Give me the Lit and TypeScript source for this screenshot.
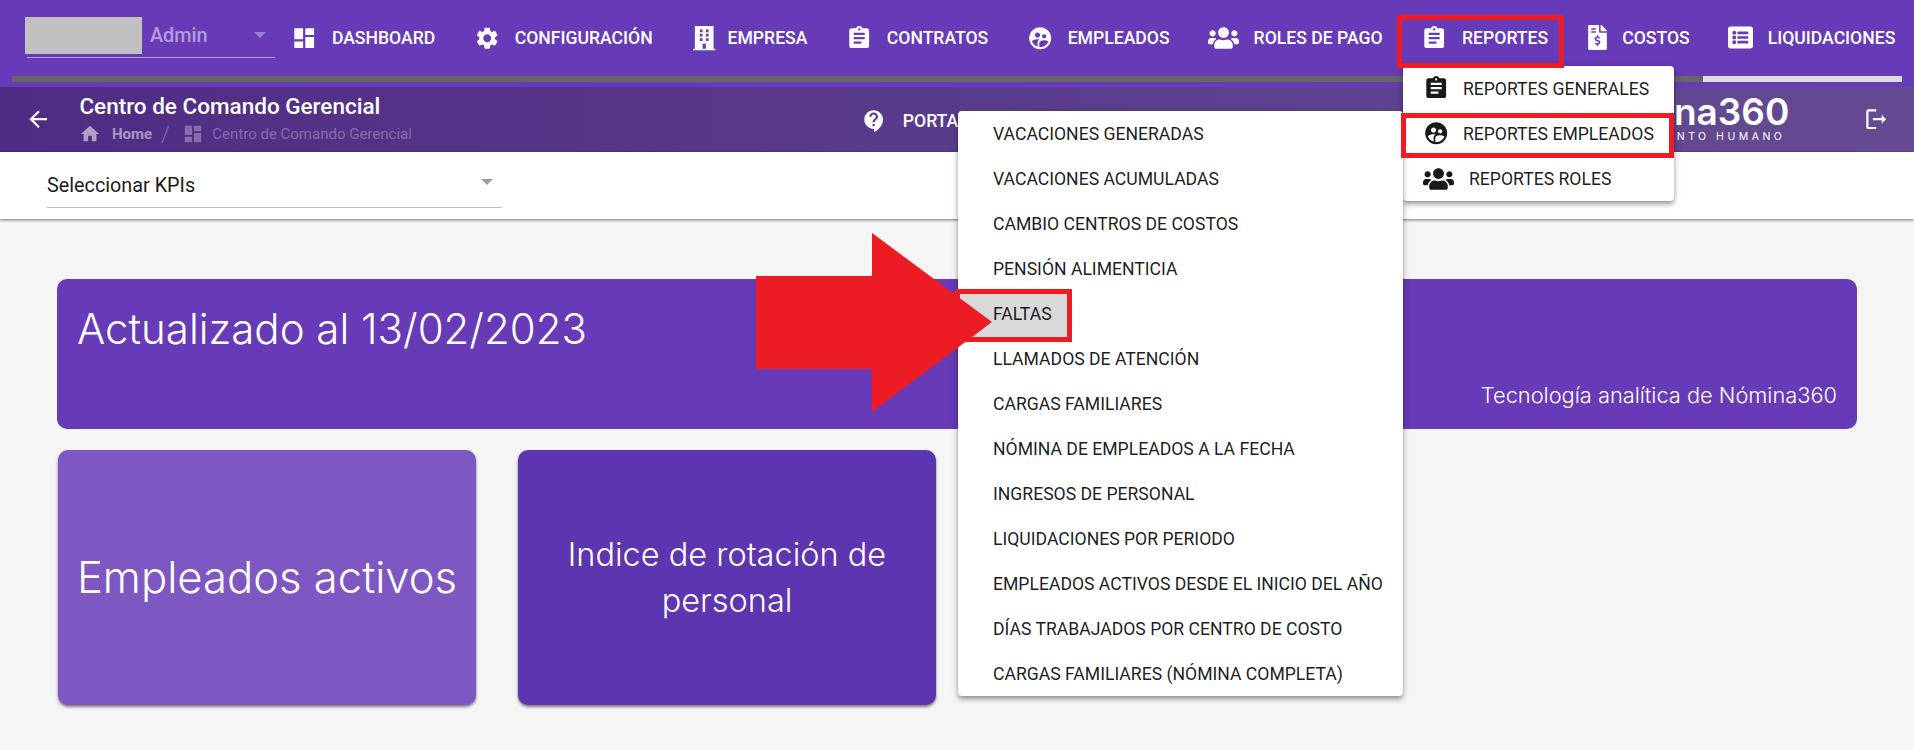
import { LitElement, html, css, svg } from "lit";
import { customElement } from "lit/decorators.js";

const P: Record<string, any> = {
  dashboard: svg`<path d="M3 13h8V3H3v10zm0 8h8v-6H3v6zm10 0h8V11h-8v10zm0-18v6h8V3h-8z"/>`,
  settings: svg`<path d="M19.14 12.94c.04-.3.06-.61.06-.94 0-.32-.02-.64-.07-.94l2.03-1.58c.18-.14.23-.41.12-.61l-1.92-3.32c-.12-.22-.37-.29-.59-.22l-2.39.96c-.5-.38-1.03-.7-1.62-.94L14.4 2.81c-.04-.24-.24-.41-.48-.41h-3.84c-.24 0-.43.17-.47.41L9.25 5.35c-.59.24-1.13.57-1.62.94l-2.39-.96c-.22-.08-.47 0-.59.22L2.74 8.87c-.12.21-.08.47.12.61l2.03 1.58c-.05.3-.09.63-.09.94s.02.64.07.94l-2.03 1.58c-.18.14-.23.41-.12.61l1.92 3.32c.12.22.37.29.59.22l2.39-.96c.5.38 1.03.7 1.62.94l.36 2.54c.05.24.24.41.48.41h3.84c.24 0 .44-.17.47-.41l.36-2.54c.59-.24 1.13-.56 1.62-.94l2.39.96c.22.08.47 0 .59-.22l1.92-3.32c.12-.22.07-.47-.12-.61l-2.01-1.58zM12 15.6c-1.98 0-3.6-1.62-3.6-3.6s1.62-3.6 3.6-3.6 3.6 1.62 3.6 3.6-1.62 3.6-3.6 3.6z"/>`,
  building: svg`<path fill-rule="evenodd" d="M3.500 1h17v20.500H22V23H2v-1.500h1.500zM8 4v2.500h2.500V4zm5.500 0v2.500H16V4zM8 8v2.500h2.500V8zm5.500 0v2.500H16V8zM8 12v2.500h2.500V12zm5.500 0v2.500H16V12zm-3 5v4.500h3V17z"/>`,
  clipboard: svg`<path d="M19 3h-4.180C14.400 1.840 13.300 1 12 1s-2.400.840-2.820 2H5c-1.100 0-2 .9-2 2v14c0 1.100.9 2 2 2h14c1.100 0 2-.9 2-2V5c0-1.100-.9-2-2-2zm-7 0c.550 0 1 .450 1 1s-.450 1-1 1-1-.450-1-1 .450-1 1-1zm2 14H7v-2h7v2zm3-4H7v-2h10v2zm0-4H7V7h10v2z"/>`,
  face: svg`<path d="M12,2C6.47,2 2,6.5 2,12A10,10 0 0,0 12,22A10,10 0 0,0 22,12C22,6.5 17.5,2 12,2M15.6,8.34C16.67,8.34 17.53,9.2 17.53,10.27C17.53,11.34 16.67,12.2 15.6,12.2A1.93,1.93 0 0,1 13.67,10.27C13.66,9.2 14.53,8.34 15.6,8.34M9.6,6.76C10.9,6.76 11.96,7.82 11.96,9.12C11.96,10.42 10.9,11.5 9.6,11.5C8.3,11.5 7.24,10.42 7.24,9.12C7.24,7.81 8.29,6.76 9.6,6.76M9.6,15.89V19.64C7.2,18.89 5.3,17.04 4.46,14.68C5.5,13.56 8.13,13 9.6,13C10.13,13 10.8,13.07 11.5,13.21C9.86,14.08 9.6,15.23 9.6,15.89M12,20C11.72,20 11.46,20 11.2,19.96V15.89C11.2,14.47 14.14,13.76 15.6,13.76C16.67,13.76 18.5,14.15 19.44,14.91C18.27,17.88 15.38,20 12,20Z"/>`,
  people: svg`<path d="M96 224c35.300 0 64-28.700 64-64s-28.700-64-64-64-64 28.700-64 64 28.700 64 64 64zm448 0c35.300 0 64-28.700 64-64s-28.700-64-64-64-64 28.700-64 64 28.700 64 64 64zm32 32h-64c-17.600 0-33.500 7.100-45.100 18.600 40.300 22.100 68.900 62 75.100 109.400h66c17.700 0 32-14.300 32-32v-32c0-35.300-28.700-64-64-64zm-256 0c61.900 0 112-50.100 112-112S381.900 32 320 32 208 82.100 208 144s50.100 112 112 112zm76.800 32h-8.300c-20.800 10-43.900 16-68.500 16s-47.600-6-68.500-16h-8.300C179.600 288 128 339.600 128 403.200V432c0 26.500 21.500 48 48 48h288c26.500 0 48-21.500 48-48v-28.800c0-63.600-51.600-115.200-115.200-115.200zm-223.700-13.400C161.500 263.100 145.600 256 128 256H64c-35.300 0-64 28.700-64 64v32c0 17.700 14.300 32 32 32h65.900c6.300-47.400 34.900-87.300 75.200-109.400z"/>`,
  invoice: svg`<path d="M377 105L279.100 7c-4.500-4.500-10.600-7-17-7H256v128h128v-6.100c0-6.300-2.500-12.400-7-16.900zM224 136V0H24C10.700 0 0 10.700 0 24v464c0 13.300 10.700 24 24 24h336c13.300 0 24-10.700 24-24V160H248c-13.200 0-24-10.800-24-24zM64 72c0-4.420 3.580-8 8-8h80c4.420 0 8 3.580 8 8v16c0 4.420-3.580 8-8 8H72c-4.420 0-8-3.580-8-8V72zm0 64c0-4.420 3.580-8 8-8h80c4.420 0 8 3.580 8 8v16c0 4.420-3.580 8-8 8H72c-4.420 0-8-3.580-8-8v-16zm144 263.880V424c0 4.420-3.580 8-8 8h-16c-4.420 0-8-3.580-8-8v-24.290c-11.290-.58-22.270-4.520-31.370-11.350-3.900-2.930-4.100-8.770-.57-12.140l11.750-11.210c2.770-2.640 6.890-2.760 10.130-.73 3.870 2.420 8.260 3.720 12.820 3.720h28.110c6.500 0 11.800-5.920 11.800-13.190 0-5.950-3.610-11.190-8.770-12.730l-45-13.500c-18.590-5.580-31.580-23.420-31.580-43.390 0-24.520 19.050-44.440 42.670-45.070V216c0-4.420 3.580-8 8-8h16c4.420 0 8 3.580 8 8v24.290c11.290.58 22.270 4.510 31.370 11.350 3.900 2.930 4.100 8.770.57 12.140l-11.750 11.210c-2.770 2.640-6.890 2.760-10.130.73-3.870-2.430-8.260-3.720-12.820-3.720h-28.110c-6.500 0-11.800 5.920-11.800 13.190 0 5.950 3.610 11.190 8.770 12.730l45 13.500c18.590 5.580 31.580 23.420 31.580 43.390 0 24.530-19.050 44.440-42.670 45.070z"/>`,
  list: svg`<path d="M464 480H48c-26.510 0-48-21.490-48-48V80c0-26.510 21.490-48 48-48h416c26.510 0 48 21.490 48 48v352c0 26.510-21.490 48-48 48zM128 120c-22.091 0-40 17.909-40 40s17.909 40 40 40 40-17.909 40-40-17.909-40-40-40zm0 96c-22.091 0-40 17.909-40 40s17.909 40 40 40 40-17.909 40-40-17.909-40-40-40zm0 96c-22.091 0-40 17.909-40 40s17.909 40 40 40 40-17.909 40-40-17.909-40-40-40zm288-136v-32c0-6.627-5.373-12-12-12H204c-6.627 0-12 5.373-12 12v32c0 6.627 5.373 12 12 12h200c6.627 0 12-5.373 12-12zm0 96v-32c0-6.627-5.373-12-12-12H204c-6.627 0-12 5.373-12 12v32c0 6.627 5.373 12 12 12h200c6.627 0 12-5.373 12-12zm0 96v-32c0-6.627-5.373-12-12-12H204c-6.627 0-12 5.373-12 12v32c0 6.627 5.373 12 12 12h200c6.627 0 12-5.373 12-12z"/>`,
  home: svg`<path d="M10 20v-6h4v6h5v-8h3L12 3 2 12h3v8z"/>`,
  back: svg`<path d="M20 11H7.830l5.590-5.590L12 4l-8 8 8 8 1.410-1.410L7.830 13H20v-2z"/>`,
  help: svg`<path fill-rule="evenodd" d="M11.500 2C6.810 2 3 5.810 3 10.500S6.810 19 11.500 19h.5v3c4.860-2.340 8-7 8-11.500C20 5.810 16.190 2 11.500 2zm1 14.500h-2v-2h2v2zm0-3.500h-2c0-3.250 3-3 3-5 0-1.100-.9-2-2-2s-2 .9-2 2h-2c0-2.210 1.790-4 4-4s4 1.790 4 4c0 2.500-3 2.750-3 5z"/>`,
  logout: svg`<path d="M5 5h7V3H5c-1.100 0-2 .9-2 2v14c0 1.100.9 2 2 2h7v-2H5V5zm16 7l-4-4v3H9v2h8v3l4-4z"/>`,
};
const VB: Record<string, string> = { invoice: "0 0 384 512", list: "0 0 512 512", people: "0 32 640 448" };
const icon = (n: string, c = "") => html`<svg class="ic ${n} ${c}" viewBox="${VB[n] ?? "0 0 24 24"}">${P[n]}</svg>`;

const NAV = [
  ["dashboard", "DASHBOARD"], ["settings", "CONFIGURACIÓN"], ["building", "EMPRESA"],
  ["clipboard", "CONTRATOS"], ["face", "EMPLEADOS"], ["people", "ROLES DE PAGO"],
  ["clipboard", "REPORTES"], ["invoice", "COSTOS"], ["list", "LIQUIDACIONES"],
];
const ITEMS = [
  "VACACIONES GENERADAS", "VACACIONES ACUMULADAS", "CAMBIO CENTROS DE COSTOS", "PENSIÓN ALIMENTICIA",
  "FALTAS", "LLAMADOS DE ATENCIÓN", "CARGAS FAMILIARES", "NÓMINA DE EMPLEADOS A LA FECHA",
  "INGRESOS DE PERSONAL", "LIQUIDACIONES POR PERIODO", "EMPLEADOS ACTIVOS DESDE EL INICIO DEL AÑO",
  "DÍAS TRABAJADOS POR CENTRO DE COSTO", "CARGAS FAMILIARES (NÓMINA COMPLETA)",
];

@customElement("app-root")
export class AppRoot extends LitElement {
  static styles = css`
    :host { display: block; position: relative; width: 1914px; height: 750px; overflow: hidden; background: #f5f5f5; font-family: Roboto, sans-serif; }
    .ic { width: 26.400px; height: 26.400px; fill: currentColor; flex: none; display: block; }
    .ic.people { width: 31px; height: 22px; }
    .ic.invoice { width: 19px; height: 25px; margin: 0 1px; }
    .ic.list { width: 25px; height: 25px; }
    .top { background: #673ab7; height: 87px; color: #fff; display: flex; flex-direction: column; }
    .row { height: 76px; display: flex; align-items: center; padding-left: 25px; }
    .user { width: 248px; margin-left: 2px; height: 40px; display: flex; align-items: center; border-bottom: 1px solid rgba(255,255,255,.5); position: relative; top: -1px; flex: none; }
    .blank { width: 117px; height: 37px; background: #c0c0c0; margin-left: -2px; margin-top: -3px; }
    .admin { margin-left: 8px; font-size: 19.800px; font-weight: 500; color: rgba(255,255,255,.5); margin-top: -3px; flex: 1; }
    .tri { width: 0; height: 0; border: 6px solid transparent; border-top-color: rgba(255,255,255,.35); border-bottom: 0; margin-right: 9px; margin-top: -3px; }
    nav { display: flex; align-items: center; margin-left: 16px; gap: 38.500px; }
    .nav { display: flex; align-items: center; gap: 14.500px; font-size: 17.600px; font-weight: 500; white-space: nowrap; }
    .nav .building { margin-right: -4.500px; }
    .bar { display: flex; height: 6px; margin: 0 12px; }
    .bar i { background: #666; flex: 1; }
    .bar b { background: #dcdcdc; width: 199px; }
    .sub { height: 65px; background: linear-gradient(90deg, #4e2c84, #654b93); color: #fff; display: flex; align-items: center; }
    .back { margin-left: 25px; }
    .crumb { margin-left: 28px; width: 782px; flex: none; }
    .title { font-size: 22.500px; font-weight: 500; line-height: 26px; white-space: nowrap; margin-top: -1px; }
    .path { display: flex; align-items: center; font-size: 15px; height: 22px; margin-top: 4px; color: rgba(255,255,255,.3); white-space: nowrap; }
    .path .ic { width: 22px; height: 22px; }
    .path .h { color: rgba(255,255,255,.5); font-weight: 700; margin-left: 10.500px; }
    .path .s { margin: 0 12px 0 9px; font-size: 22px; font-weight: 300; }
    .path .ic.dash { margin-right: 8.500px; }
    .path .ic.crumbhome { color: rgba(255,255,255,.55); }
    .portal { display: flex; align-items: center; gap: 15px; font-size: 17.600px; font-weight: 500; margin-top: 4px; flex: none; width: 480px; white-space: nowrap; }
    .logo { flex: none; width: 448px; text-align: right; line-height: 1; overflow: hidden; margin-top: -3px; }
    .logo .n { font-family: Inter, sans-serif; font-size: 37px; font-weight: 600; }
    .logo .t { font-family: Inter, sans-serif; font-size: 10.500px; letter-spacing: 3.500px; font-weight: 400; margin-right: 4px; margin-top: 2px; }
    .out { margin-left: 74px; }
    .kbar { height: 67px; background: #fff; box-shadow: 0 1px 3px rgba(0,0,0,.55); position: relative; padding-left: 47px; }
    .sel { width: 455px; height: 56px; border-bottom: 1px solid #bdbdbd; display: flex; align-items: center; justify-content: space-between; font-size: 19.800px; color: #1c1c1c; padding-top: 12px; box-sizing: border-box; }
    .sel .tri { border-top-color: #9e9e9e; margin-right: 9px; margin-top: -8px; }
    main { padding: 60px 57px 0; font-family: "Inter", sans-serif; color: #fff; }
    .banner { background: #673ab7; border-radius: 10px; height: 150px; width: 1800px; position: relative; box-sizing: border-box; padding: 25px 20px; font-size: 42px; font-weight: 300; line-height: 1.200; }
    .banner small { position: absolute; right: 20px; bottom: 21px; font-size: 21.800px; line-height: 1.200; }
    .cards { display: flex; gap: 42px; margin: 21px 0 0 1px; }
    .card { width: 418px; height: 255px; border-radius: 10px; display: flex; align-items: center; justify-content: center; text-align: center; box-shadow: 0 2px 3px rgba(0,0,0,.5); font-weight: 300; box-sizing: border-box; padding: 0 40px; }
    .c1 { background: #7e57c2; font-size: 43.600px; padding: 0; }
    .c2 { background: #5e35b1; font-size: 32.500px; line-height: 46px; }
    .menu { position: absolute; background: #fff; border-radius: 4px; box-shadow: 0 2px 4px -1px rgba(0,0,0,.3), 0 4px 5px rgba(0,0,0,.18), 0 1px 10px rgba(0,0,0,.12); color: rgba(0,0,0,.9); font-size: 17.600px; font-weight: 400; }
    .m1 { left: 1403px; top: 66px; width: 271px; }
    .m2 { left: 958px; top: 111px; width: 445px; }
    .mi { height: 45px; display: flex; align-items: center; white-space: nowrap; position: relative; }
    .mi span { padding-top: 1px; position: relative; }
    .m1 .mi { padding-left: 19.500px; gap: 14px; }
    .m1 .mi.rr { gap: 15.500px; }
    .m2 .mi { padding-left: 35px; }
    .falt::before { content: ""; position: absolute; left: -3px; top: -2px; width: 107px; height: 43px; background: #d9d9d9; border: 5px solid #ed1c24; }
    .box { position: absolute; border: 5px solid #ed1c24; box-sizing: border-box; }
    .b1 { left: 1397px; top: 15px; width: 167px; height: 53px; }
    .b2 { left: 1401px; top: 113px; width: 273px; height: 45px; }
    .arrow { position: absolute; left: 756px; top: 233px; width: 237px; height: 180px; fill: #ed1c24; }
  `;
  render() {
    return html`
      <div class="top">
        <div class="row">
          <div class="user"><div class="blank"></div><div class="admin">Admin</div><div class="tri"></div></div>
          <nav>
            ${NAV.map(([i, t]) => html`<div class="nav">${icon(i)}<span>${t}</span></div>`)}
          </nav>
        </div>
        <div class="bar"><i></i><b></b></div>
      </div>
      <div class="sub">
        ${icon("back")}
        <div class="crumb">
          <div class="title">Centro de Comando Gerencial</div>
          <div class="path">${icon("home", "crumbhome")}<span class="h">Home</span><span class="s">/</span>${icon("dashboard", "dash")}<span>Centro de Comando Gerencial</span></div>
        </div>
        <div class="portal">${icon("help")}<span>PORTAL DE AYUDA</span></div>
        <div class="logo"><div class="n">Nómina360</div><div class="t">TALENTO HUMANO</div></div>
        ${icon("logout", "out")}
      </div>
      <div class="kbar"><div class="sel"><span>Seleccionar KPIs</span><div class="tri"></div></div></div>
      <main>
        <div class="banner">Actualizado al 13/02/2023<small>Tecnología analítica de Nómina360</small></div>
        <div class="cards">
          <div class="card c1">Empleados activos</div>
          <div class="card c2">Indice de rotación de personal</div>
        </div>
      </main>
      <div class="menu m1">
        <div class="mi">${icon("clipboard")}<span>REPORTES GENERALES</span></div>
        <div class="mi">${icon("face")}<span>REPORTES EMPLEADOS</span></div>
        <div class="mi rr">${icon("people")}<span>REPORTES ROLES</span></div>
      </div>
      <div class="menu m2">
        ${ITEMS.map((t) => html`<div class="mi ${t === "FALTAS" ? "falt" : ""}"><span>${t}</span></div>`)}
      </div>
      <div class="box b1"></div>
      <div class="box b2"></div>
      <svg class="arrow" viewBox="0 0 237 180"><path d="M0 43H116V0L236 89 116 179V136H0z"/></svg>
    `;
  }
}
